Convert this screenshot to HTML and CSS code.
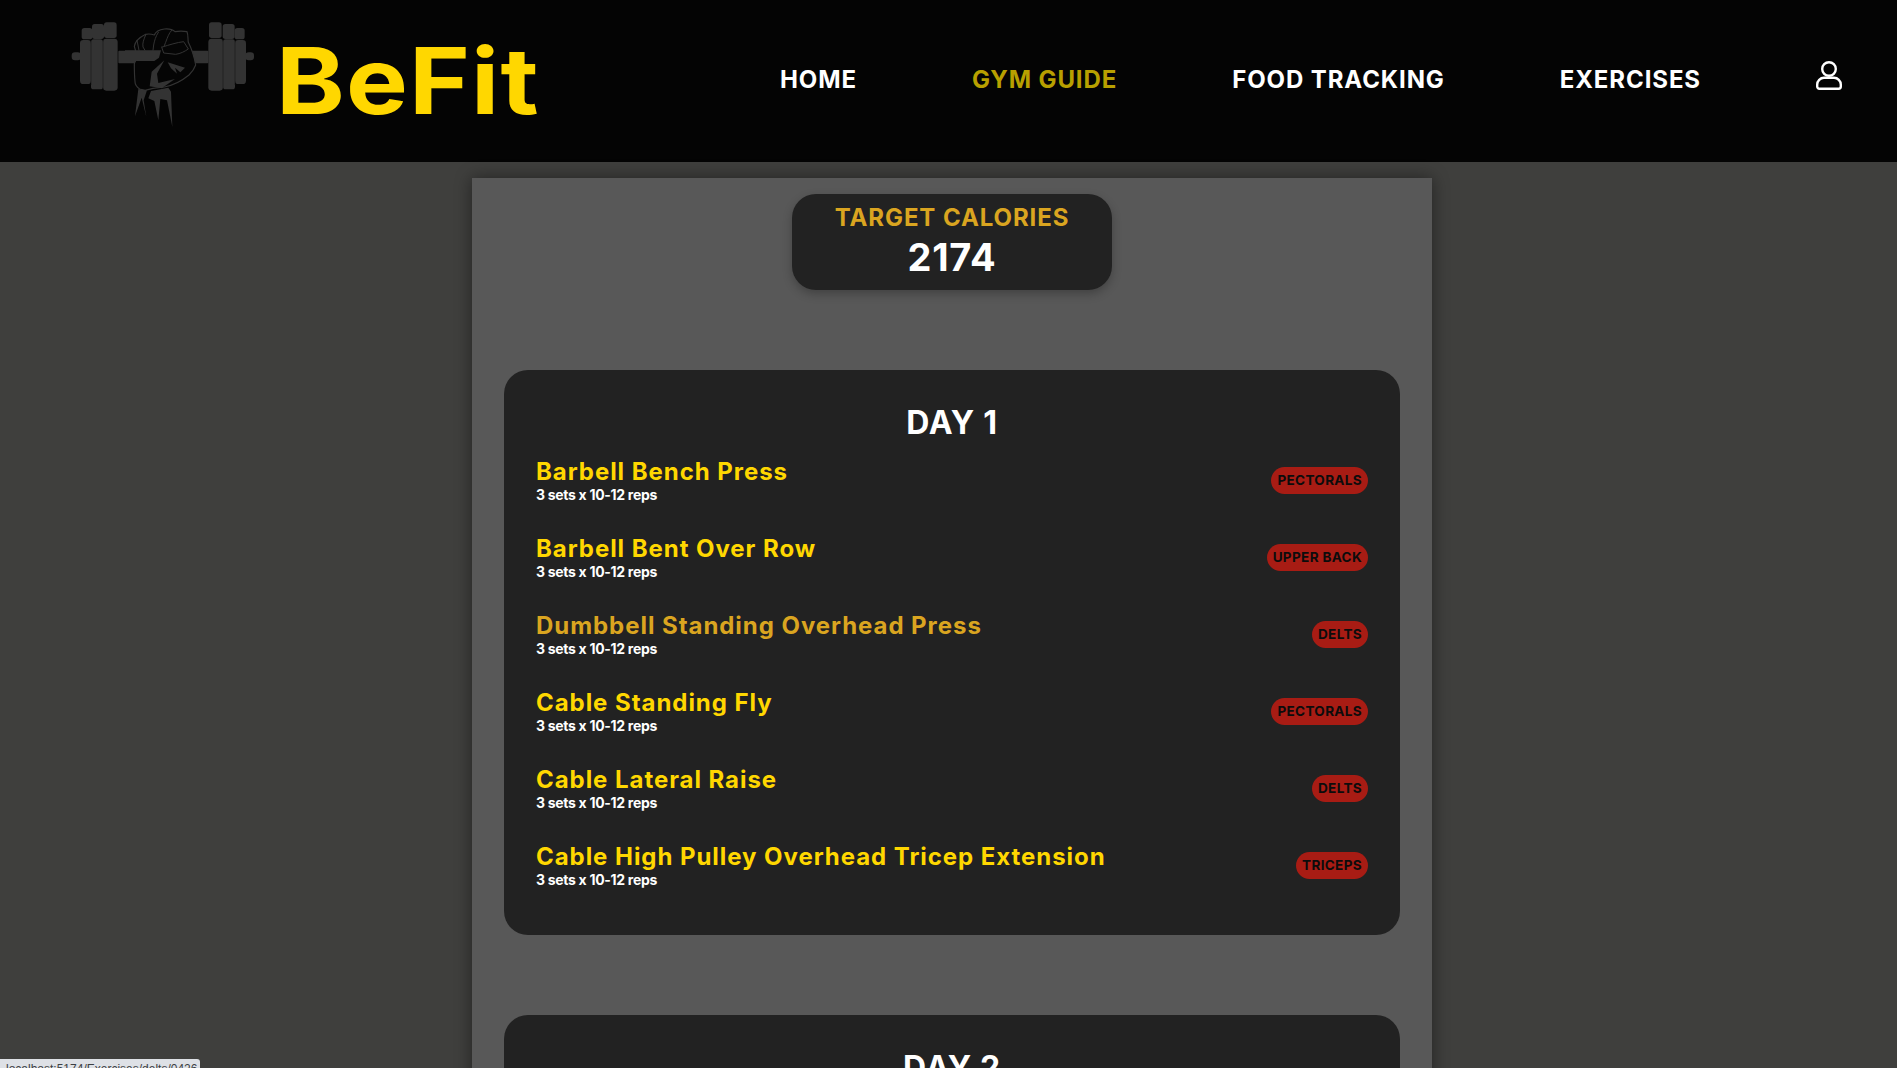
FILE: index.html
```html
<!DOCTYPE html>
<html lang="en">
<head>
<meta charset="utf-8">
<title>BeFit</title>
<link rel="stylesheet" href="styles.css">
</head>
<body>
<header class="site-header">
  <a class="brand" href="#">
    <svg class="brand-mark" viewBox="0 0 630 375" aria-hidden="true">
      <g class="iron">
        <rect x="35" y="127" width="28" height="24" rx="10"/>
        <rect x="60" y="90" width="33" height="132" rx="10"/>
        <rect x="65" y="54" width="32" height="34" rx="8"/>
        <rect x="93" y="88" width="36" height="150" rx="8"/>
        <rect x="96" y="42" width="36" height="45" rx="8"/>
        <rect x="129" y="86" width="44" height="156" rx="10"/>
        <rect x="132" y="37" width="38" height="47" rx="8"/>
        <rect x="175" y="122" width="270" height="38" rx="3"/>
        <rect x="445" y="86" width="44" height="156" rx="10"/>
        <rect x="447" y="37" width="38" height="47" rx="8"/>
        <rect x="489" y="88" width="36" height="150" rx="8"/>
        <rect x="488" y="42" width="36" height="45" rx="8"/>
        <rect x="525" y="90" width="33" height="132" rx="10"/>
        <rect x="524" y="54" width="30" height="34" rx="8"/>
        <rect x="556" y="127" width="26" height="24" rx="10"/>
      </g>
      <path class="grooves" d="M93 90V225M129 88V238M489 88V238M525 90V225"/>
      <g transform="translate(195 45)">
        <path class="fist" d="M28 64C30 50 46 36 62 28C72 26 82 28 88 30C92 20 102 14 118 12C130 11 144 14 150 20C160 18 176 18 186 20C190 30 188 42 190 52C198 68 208 96 212 120C208 132 200 142 192 150C170 168 140 182 118 186L84 190 60 196 44 192C36 186 30 178 30 170C28 150 28 130 28 116C32 106 36 100 36 92Z"/>
        <path class="iron" d="M0 76H108L102 98 88 108H0Z"/>
        <path class="fist-lines" d="M62 30C56 44 52 54 54 66L60 76M100 22C92 34 88 48 86 60L84 76M140 16C132 24 128 36 122 52L118 62M36 46 42 76M112 66C132 60 156 52 176 50L190 72C178 80 166 86 152 88L116 84 110 66"/>
        <path class="iron" d="M74 184 80 140 118 106 96 146 100 174 150 162 110 190ZM40 192 66 196 56 226 64 276 50 218 30 274ZM78 198 130 188 138 200 142 306 126 226 106 222 100 286 88 228 70 220ZM128 112 180 128 166 142 150 128 156 146 138 130Z"/>
      </g>
    </svg>
    <span class="brand-name">BeFit</span>
  </a>
  <nav class="main-nav">
    <a class="nav-link" href="#">HOME</a>
    <a class="nav-link nav-link-active" href="#">GYM GUIDE</a>
    <a class="nav-link" href="#">FOOD TRACKING</a>
    <a class="nav-link" href="#">EXERCISES</a>
    <a class="account" href="#" aria-label="Account">
      <svg viewBox="0 0 26 29" width="26" height="29" aria-hidden="true">
        <circle cx="13" cy="8" r="6.8"/>
        <path d="M8 16.8h10a6.8 6.8 0 0 1 6.8 6.8v2a2.2 2.2 0 0 1-2.2 2.2H3.4a2.2 2.2 0 0 1-2.2-2.2v-2A6.8 6.8 0 0 1 8 16.8Z"/>
      </svg>
    </a>
  </nav>
</header>

<main class="panel">
  <section class="target">
    <div class="target-label">TARGET CALORIES</div>
    <div class="target-value">2174</div>
  </section>

  <section class="day">
    <h2 class="day-title">DAY 1</h2>
    <a class="exercise" href="#">
      <div><div class="exercise-name">Barbell Bench Press</div><div class="exercise-sets">3 sets x 10-12 reps</div></div>
      <span class="muscle">PECTORALS</span>
    </a>
    <a class="exercise" href="#">
      <div><div class="exercise-name">Barbell Bent Over Row</div><div class="exercise-sets">3 sets x 10-12 reps</div></div>
      <span class="muscle">UPPER BACK</span>
    </a>
    <a class="exercise exercise-hover" href="#">
      <div><div class="exercise-name">Dumbbell Standing Overhead Press</div><div class="exercise-sets">3 sets x 10-12 reps</div></div>
      <span class="muscle">DELTS</span>
    </a>
    <a class="exercise" href="#">
      <div><div class="exercise-name">Cable Standing Fly</div><div class="exercise-sets">3 sets x 10-12 reps</div></div>
      <span class="muscle">PECTORALS</span>
    </a>
    <a class="exercise" href="#">
      <div><div class="exercise-name">Cable Lateral Raise</div><div class="exercise-sets">3 sets x 10-12 reps</div></div>
      <span class="muscle">DELTS</span>
    </a>
    <a class="exercise" href="#">
      <div><div class="exercise-name">Cable High Pulley Overhead Tricep Extension</div><div class="exercise-sets">3 sets x 10-12 reps</div></div>
      <span class="muscle">TRICEPS</span>
    </a>
  </section>

  <section class="day">
    <h2 class="day-title">DAY 2</h2>
  </section>
</main>

<div class="status-bubble">localhost:5174/Exercises/delts/0426</div>
</body>
</html>
```

FILE: styles.css
```css
* { box-sizing: border-box; }
html, body { height: 100%; margin: 0; overflow: hidden; }
body {
  background: #3f3f3d;
  color: #fff;
  font-family: Inter, "Liberation Sans", sans-serif;
}
a { color: inherit; text-decoration: none; }

.site-header {
  height: 162px;
  background: #040404;
  display: flex;
  align-items: center;
  padding: 0 55px 0 60px;
}
.brand { display: flex; align-items: center; }
.brand-mark { width: 210px; height: 125px; display: block; margin: -17px 6px 0 0; }
.brand-name {
  display: block;
  font-size: 92px;
  font-weight: 700;
  line-height: 112px;
  letter-spacing: 1px;
  color: #ffd700;
  transform: scaleX(1.13);
  transform-origin: left center;
}
.iron { fill: #333; }
.grooves { fill: none; stroke: #111; stroke-width: 1.5; }
.fist { fill: #050505; stroke: #333; stroke-width: 3.5; stroke-linejoin: round; }
.fist-lines { fill: none; stroke: #333; stroke-width: 3; stroke-linecap: round; stroke-linejoin: round; }

.main-nav {
  margin-left: auto;
  display: flex;
  align-items: center;
  gap: 115px;
  padding-bottom: 2px;
}
.nav-link { font-size: 24px; font-weight: 700; line-height: 30px; letter-spacing: 0.9px; }
.nav-link-active { color: #b8a000; }
.account { display: block; height: 29px; margin-top: -9px; }
.account svg { display: block; fill: none; stroke: #fff; stroke-width: 2.4; }

.panel {
  width: 960px;
  min-height: 2000px;
  margin: 16px 0 0 472px;
  padding: 16px 32px 0;
  background: #585858;
  box-shadow: 0 0 16px rgba(0, 0, 0, 0.45);
}
.target {
  width: 320px;
  height: 96px;
  margin: 0 auto 80px;
  padding-top: 9px;
  border-radius: 24px;
  background: #222;
  box-shadow: 0 4px 10px rgba(0, 0, 0, 0.25);
  text-align: center;
}
.target-label { font-size: 24px; font-weight: 700; line-height: 30px; letter-spacing: 0.9px; color: #daa520; }
.target-value { font-size: 38px; font-weight: 700; line-height: 48px; letter-spacing: 0.8px; }

.day {
  margin-bottom: 80px;
  padding: 33px 32px 31px;
  border-radius: 24px;
  background: #222;
}
.day-title {
  margin: 0;
  font-size: 32px;
  font-weight: 700;
  line-height: 39px;
  letter-spacing: 0.7px;
  text-align: center;
}
.exercise {
  height: 77px;
  display: flex;
  align-items: center;
  justify-content: space-between;
  color: #ffd700;
}
.exercise-hover { color: #daa520; }
.exercise-name { font-size: 24px; font-weight: 700; line-height: 28px; letter-spacing: 0.95px; }
.exercise-sets { font-size: 14px; font-weight: 700; line-height: 17px; letter-spacing: -0.3px; color: #fff; }
.muscle {
  height: 27px;
  padding: 0 6px;
  border-radius: 14px;
  background: #a81c14;
  color: #0c0c0c;
  font-size: 13.6px;
  font-weight: 700;
  line-height: 27px;
  letter-spacing: 0.3px;
}

.status-bubble {
  position: fixed;
  left: 0;
  bottom: 0;
  width: 200px;
  height: 9px;
  padding: 2px 0 0 6px;
  overflow: hidden;
  border-top-right-radius: 3px;
  background: #dee1e6;
  color: #3c4043;
  font-family: "Liberation Sans", sans-serif;
  font-size: 12px;
  line-height: 16px;
  white-space: nowrap;
}
```
